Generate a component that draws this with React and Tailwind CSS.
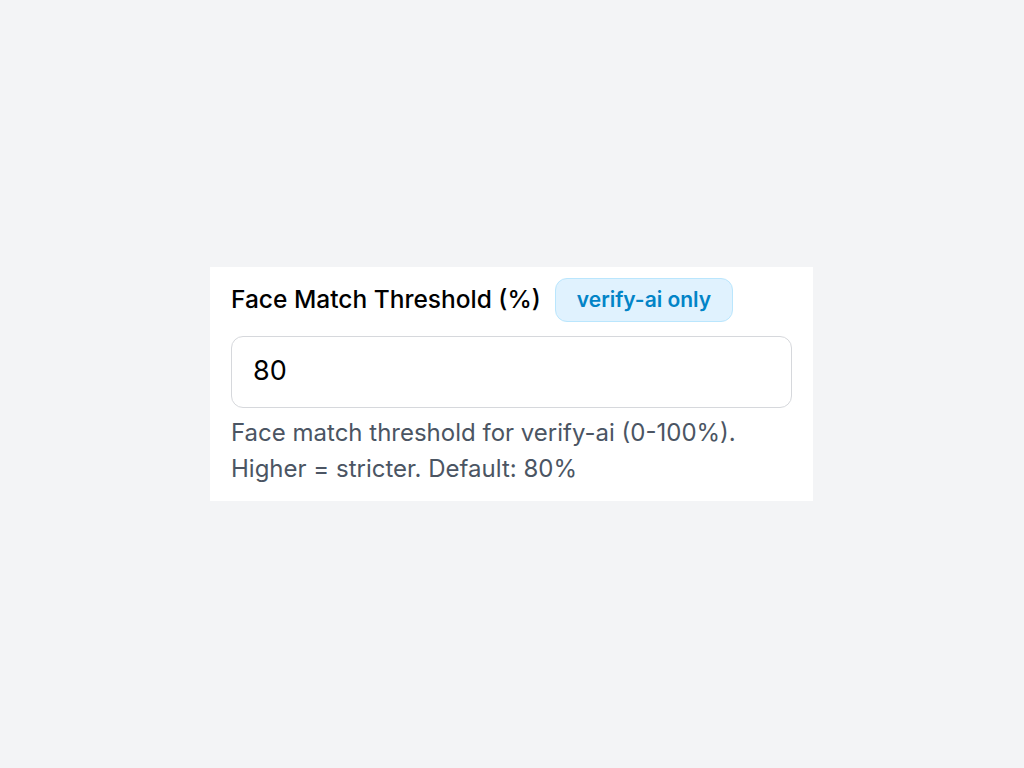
export default function App() {
  return (
    <div className="min-h-screen w-full bg-[#f3f4f6] flex items-center justify-center" style={{ fontFamily: 'Inter, "Noto Sans", sans-serif' }}>
      <div className="w-[603px] bg-white px-[21px] pt-[11px] pb-[14px] mt-[-1px] mr-[1px]">
        <div className="flex items-center gap-[14px] mb-[14px]">
          <span className="text-[24.5px] font-medium text-black">Face Match Threshold (%)</span>
          <span className="h-[44px] px-[21px] flex items-center rounded-[12px] bg-[#e0f2fe] border border-[#bae6fd] text-[#0284c7] text-[21px] font-semibold">verify-ai only</span>
        </div>
        <div className="h-[72px] w-full rounded-[12px] border border-[#d6d8dc] flex items-center px-[21px] text-[27px] text-black">80</div>
        <p className="mt-[7px] text-[24px] leading-[36px] font-normal text-[#4b5563]">Face match threshold for verify-ai (0-100%). Higher = stricter. Default: 80%</p>
      </div>
    </div>
  );
}
